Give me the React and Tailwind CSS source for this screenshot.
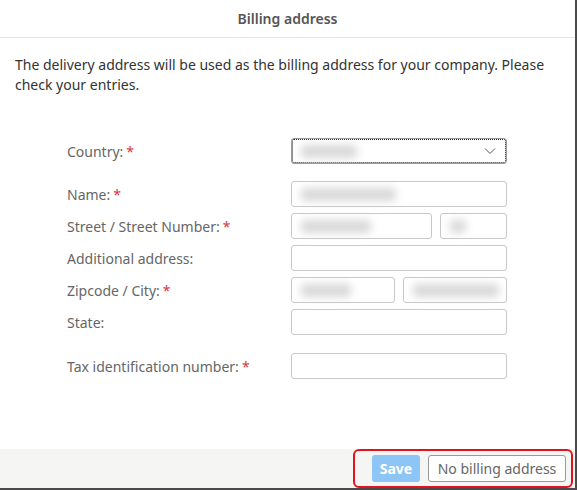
import React from 'react';

const Label = ({ children, required }) => (
  <div className="w-[224px] shrink-0 text-[14px] text-[#666]">
    {children}
    {required && <span className="text-[#d9363e] ml-[3px]">*</span>}
  </div>
);

// blurred placeholder for hidden values
const Blur = ({ w }) => (
  <span className="absolute left-[9px] top-[6px] h-[13px] bg-[#d8d8d8] blur-[4px] rounded" style={{ width: w }} />
);

const Input = ({ className = '', blur }) => (
  <div className={`relative h-[26px] border border-[#c8c8c8] rounded-[3px] bg-white ${className}`}>
    {blur && <Blur w={blur} />}
  </div>
);

export default function App() {
  return (
    <div className="w-[577px] h-[490px] bg-[#4a4a4a]" style={{ fontFamily: '"Noto Sans", "Open Sans", sans-serif' }}>
      <div className="w-[575px] h-[488px] bg-white flex flex-col">
        {/* Header */}
        <div className="h-[38px] shrink-0 border-b border-[#e6e6e6] flex items-center justify-center">
          <span className="text-[14px] font-semibold text-[#555]">Billing address</span>
        </div>

        {/* Body */}
        <div className="flex-1 px-[15px]">
          <p className="mt-[17px] text-[14px] leading-[20px] text-[#333]">
            The delivery address will be used as the billing address for your company. Please check your entries.
          </p>

          <div className="mt-[43px] pl-[52px]">
            <div className="flex items-center">
              <Label required>Country:</Label>
              <div className="relative w-[216px] h-[26px] rounded-[3px] border border-[#999] outline-1 outline-dotted outline-[#222] -outline-offset-2 bg-white">
                <Blur w={56} />
                <svg className="absolute right-[10px] top-[8px] w-[12px] h-[8px]" viewBox="0 0 12 8" fill="none" stroke="#555" strokeWidth="1">
                  <path d="M1 1.5l5 5 5-5" />
                </svg>
              </div>
            </div>

            <div className="flex items-center mt-[17px]">
              <Label required>Name:</Label>
              <Input className="w-[216px]" blur={95} />
            </div>

            <div className="flex items-center mt-[6px]">
              <Label required>Street / Street Number:</Label>
              <Input className="w-[141px]" blur={70} />
              <Input className="w-[67px] ml-[8px]" blur={16} />
            </div>

            <div className="flex items-center mt-[6px]">
              <Label>Additional address:</Label>
              <Input className="w-[216px]" />
            </div>

            <div className="flex items-center mt-[6px]">
              <Label required>Zipcode / City:</Label>
              <Input className="w-[104px]" blur={50} />
              <Input className="w-[104px] ml-[8px]" blur={86} />
            </div>

            <div className="flex items-center mt-[6px]">
              <Label>State:</Label>
              <Input className="w-[216px]" />
            </div>

            <div className="flex items-center mt-[18px]">
              <Label required>Tax identification number:</Label>
              <Input className="w-[216px]" />
            </div>
          </div>
        </div>

        {/* Footer */}
        <div className="h-[39px] shrink-0 bg-[#f5f5f4] flex items-center justify-end">
          <div className="flex items-center justify-end gap-[8px] w-[220px] h-[39px] border-2 border-[#e0141e] rounded-[6px] pr-[5px] mr-[2px]">
            <button className="h-[27px] w-[48px] rounded-[3px] bg-[#8ec5f7] text-white font-bold text-[14px]">
              Save
            </button>
            <button className="h-[27px] w-[138px] rounded-[3px] border border-[#999] bg-white text-[#666] text-[14px]">
              No billing address
            </button>
          </div>
        </div>
      </div>
    </div>
  );
}
